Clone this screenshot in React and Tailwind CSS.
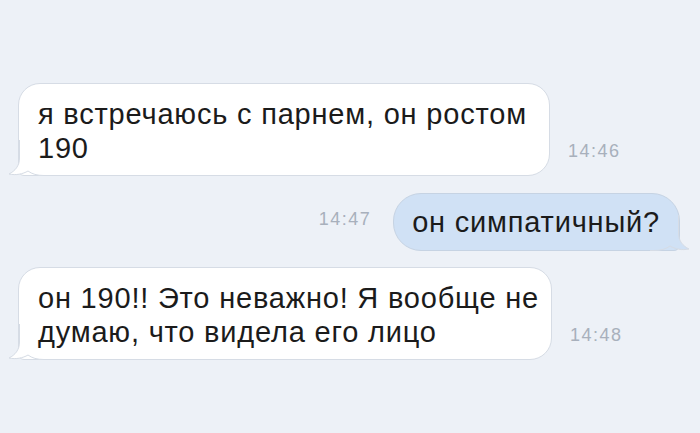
import React from "react";

const FONT = { fontFamily: '"Liberation Sans", Arial, "Noto Sans", sans-serif' };

// ── хвостик пузыря (слева для входящих, справа для исходящих)
function Tail({ side, fill }) {
  const fillPath =
    "M11.5 0 L11.5 18 C11.5 26 7 31 1 34 C8 35.5 15 34 20 31 C24 34 29 35.5 36 35.5 L40 35.5 L40 0 Z";
  const strokePath =
    "M11.5 0 L11.5 18 C11.5 26 7 31 1 34 C8 35.5 15 34 20 31 C24 34 29 35.5 36 35.5 L40 35.5";
  return (
    <svg
      className={`absolute bottom-[-1px] ${side === "left" ? "left-[-11px]" : "right-[-11px] -scale-x-100"}`}
      width="40"
      height="36"
      viewBox="0 0 40 36"
    >
      <path d={fillPath} fill={fill} />
      <path d={strokePath} fill="none" stroke="#d6dce5" strokeWidth="1" />
    </svg>
  );
}

function Time({ children, className = "" }) {
  return (
    <span className={`text-[18px] tracking-[1.5px] leading-none text-[#a8b0bc] shrink-0 ${className}`}>
      {children}
    </span>
  );
}

export default function App() {
  return (
    <div
      className="w-[700px] h-[433px] bg-[#edf1f7] overflow-hidden pt-[83px] text-[#1b1b1b]"
      style={FONT}
    >
      {/* входящее 1 */}
      <div className="flex items-end pl-[18px]">
        <div className="relative w-[532px] h-[93px] bg-white border border-[#d6dce5] rounded-[22px] rounded-bl-[6px] pl-[19px] pt-[13px]">
          <Tail side="left" fill="#ffffff" />
          <p className="relative text-[29px] tracking-[0.8px] leading-[34px] whitespace-nowrap">
            я встречаюсь с парнем, он ростом
            <br />
            190
          </p>
        </div>
        <Time className="ml-[18px] mb-[16px]">14:46</Time>
      </div>

      {/* исходящее */}
      <div className="flex items-center justify-end pr-[20px] mt-[17px]">
        <Time className="mr-[22px] mt-[-6px]">14:47</Time>
        <div className="relative h-[58px] bg-[#d0e1f5] border border-[#c6d3e3] rounded-[28px] rounded-br-[6px] pl-[18px] pr-[19px] flex items-center">
          <Tail side="right" fill="#d0e1f5" />
          <p className="relative text-[29px] tracking-[0.8px] leading-[34px] whitespace-nowrap">он симпатичный?</p>
        </div>
      </div>

      {/* входящее 2 */}
      <div className="flex items-end pl-[18px] mt-[16px]">
        <div className="relative w-[534px] h-[93px] bg-white border border-[#d6dce5] rounded-[22px] rounded-bl-[6px] pl-[19px] pt-[13px]">
          <Tail side="left" fill="#ffffff" />
          <p className="relative text-[29px] tracking-[0.8px] leading-[34px] whitespace-nowrap">
            он 190!! Это неважно! Я вообще не
            <br />
            думаю, что видела его лицо
          </p>
        </div>
        <Time className="ml-[18px] mb-[16px]">14:48</Time>
      </div>
    </div>
  );
}
